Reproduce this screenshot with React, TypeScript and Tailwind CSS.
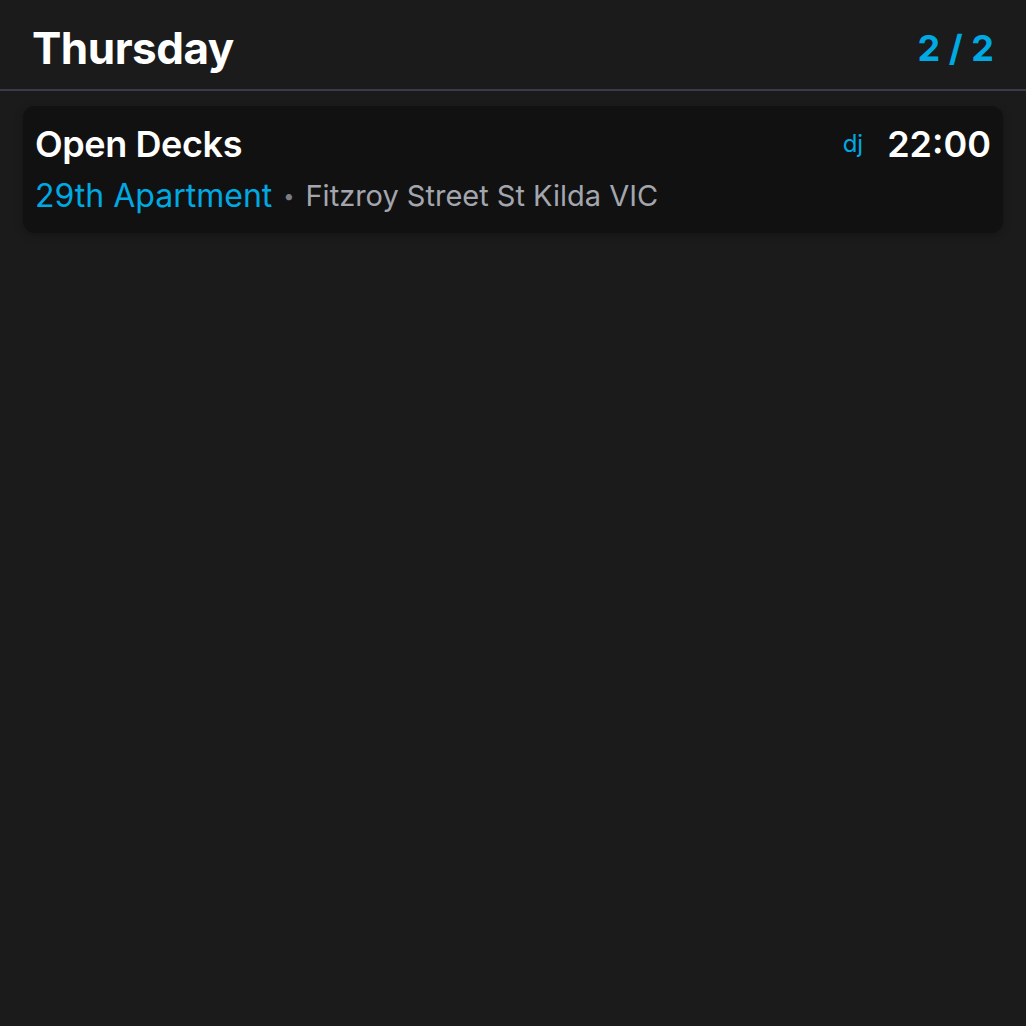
import React from "react";

const events = [
  {
    title: "Open Decks",
    venue: "29th Apartment",
    address: "Fitzroy Street St Kilda VIC",
    tag: "dj",
    time: "22:00",
  },
];

function App() {
  return (
    <div
      className="min-h-screen w-full bg-[#1b1b1b] text-white"
      style={{ fontFamily: "Inter, 'Noto Sans', sans-serif" }}
    >
      <div className="flex items-center justify-between h-[91px] pt-[6px] px-8 border-b-2 border-[#373c46]">
        <h1 className="text-[44px] font-bold tracking-[-0.5px] leading-none">Thursday</h1>
        <span className="text-[36px] font-bold text-[#00a9e2] leading-none">2 / 2</span>
      </div>

      <div className="px-[23px] pt-[15px] space-y-3">
        {events.map((ev) => (
          <div
            key={ev.title}
            className="rounded-xl bg-[#111111] px-3 pt-[18px] pb-[19px] shadow-[0_2px_8px_rgba(0,0,0,0.25)]"
          >
            <div className="flex items-center justify-between">
              <div className="text-[36px] font-semibold leading-[40px] tracking-[-0.4px]">{ev.title}</div>
              <div className="flex items-center gap-6">
                <span className="text-[24px] text-[#00a9e2] leading-none">{ev.tag}</span>
                <span className="text-[36px] font-semibold leading-none">{ev.time}</span>
              </div>
            </div>
            <div className="mt-[14px] flex items-center leading-[36px]">
              <span className="text-[32px] text-[#00a9e2]">{ev.venue}</span>
              <span className="ml-[11px] mr-[11px] text-[#7a7d85] text-[20px]">•</span>
              <span className="text-[29px] text-[#a3a6ae]">{ev.address}</span>
            </div>
          </div>
        ))}
      </div>
    </div>
  );
}

export default App;
